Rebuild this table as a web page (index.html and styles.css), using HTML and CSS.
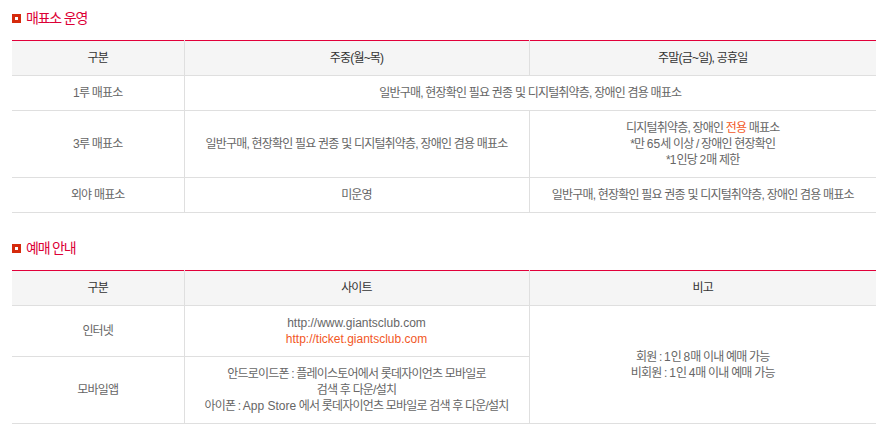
FILE: index.html
```html
<!DOCTYPE html>
<html lang="ko">
<head>
<meta charset="utf-8">
<title>매표소 운영 / 예매 안내</title>
<link rel="stylesheet" href="styles.css">
</head>
<body>
<div class="page">
  <section class="section">
    <h2 class="title"><svg class="bullet" width="9" height="9" viewBox="0 0 9 9"><rect width="9" height="9" fill="#d52a0c"/><rect x="3" y="3" width="3" height="3" fill="#fff"/></svg>매표소 운영</h2>
    <table class="info">
      <colgroup><col class="c1"><col class="c2"><col class="c3"></colgroup>
      <thead>
        <tr><th>구분</th><th>주중(월~목)</th><th>주말(금~일), 공휴일</th></tr>
      </thead>
      <tbody>
        <tr><td>1루 매표소</td><td colspan="2">일반구매, 현장확인 필요 권종 및 디지털취약층, 장애인 겸용 매표소</td></tr>
        <tr><td>3루 매표소</td><td>일반구매, 현장확인 필요 권종 및 디지털취약층, 장애인 겸용 매표소</td><td>디지털취약층, 장애인 <span class="hl">전용</span> 매표소<br>*만 <span class="lat">65</span>세 이상 / 장애인 현장확인<br>*<span class="lat">1</span>인당 <span class="lat">2</span>매 제한</td></tr>
        <tr><td>외야 매표소</td><td>미운영</td><td>일반구매, 현장확인 필요 권종 및 디지털취약층, 장애인 겸용 매표소</td></tr>
      </tbody>
    </table>
  </section>
  <section class="section">
    <h2 class="title"><svg class="bullet" width="9" height="9" viewBox="0 0 9 9"><rect width="9" height="9" fill="#d52a0c"/><rect x="3" y="3" width="3" height="3" fill="#fff"/></svg>예매 안내</h2>
    <table class="info">
      <colgroup><col class="c1"><col class="c2"><col class="c3"></colgroup>
      <thead>
        <tr><th>구분</th><th>사이트</th><th>비고</th></tr>
      </thead>
      <tbody>
        <tr><td>인터넷</td><td><span class="lat">http://www.giantsclub.com</span><br><span class="lat hl">http://ticket.giantsclub.com</span></td><td rowspan="2">회원 : <span class="lat">1</span>인 <span class="lat">8</span>매 이내 예매 가능<br>비회원 : <span class="lat">1</span>인 <span class="lat">4</span>매 이내 예매 가능</td></tr>
        <tr><td>모바일앱</td><td>안드로이드폰 : 플레이스토어에서 롯데자이언츠 모바일로<br>검색 후 다운/설치<br>아이폰 : <span class="lat">App Store</span> 에서 롯데자이언츠 모바일로 검색 후 다운/설치</td></tr>
      </tbody>
    </table>
  </section>
</div>
</body>
</html>
```

FILE: styles.css
```css
html, body {
  margin: 0;
  padding: 0;
  background: #fff;
}

.page {
  padding: 8px 0 0 12px;
  font-family: "Liberation Sans", "Noto Sans CJK KR", sans-serif;
  font-size: 12px;
  color: #666;
}

.section + .section {
  margin-top: 25px;
}

.title {
  display: flex;
  align-items: center;
  gap: 5px;
  height: 20px;
  margin: 0 0 12px;
  font-size: 14px;
  font-weight: normal;
  letter-spacing: -1.2px;
  color: #dc0036;
  line-height: 20px;
}

.bullet {
  display: block;
  flex: none;
  margin-top: 1px;
}

.info {
  width: 864px;
  border-collapse: collapse;
  table-layout: fixed;
  border-top: 1px solid #e2003a;
}

.c1 { width: 172px; }
.c2 { width: 345px; }
.c3 { width: 347px; }

.info th,
.info td {
  padding: 9px 4px;
  line-height: 16px;
  text-align: center;
  vertical-align: middle;
  border-bottom: 1px solid #dfdfdf;
  border-left: 1px solid #dfdfdf;
  letter-spacing: -0.8px;
  font-weight: normal;
}

.info th:first-child,
.info tr > td:first-child {
  border-left: 0;
}

.info td[rowspan] {
  border-left: 1px solid #dfdfdf;
}

.info th {
  background: #f5f5f5;
  color: #333;
}

.lat {
  letter-spacing: 0;
}

.hl {
  color: #f2581f;
}
```
